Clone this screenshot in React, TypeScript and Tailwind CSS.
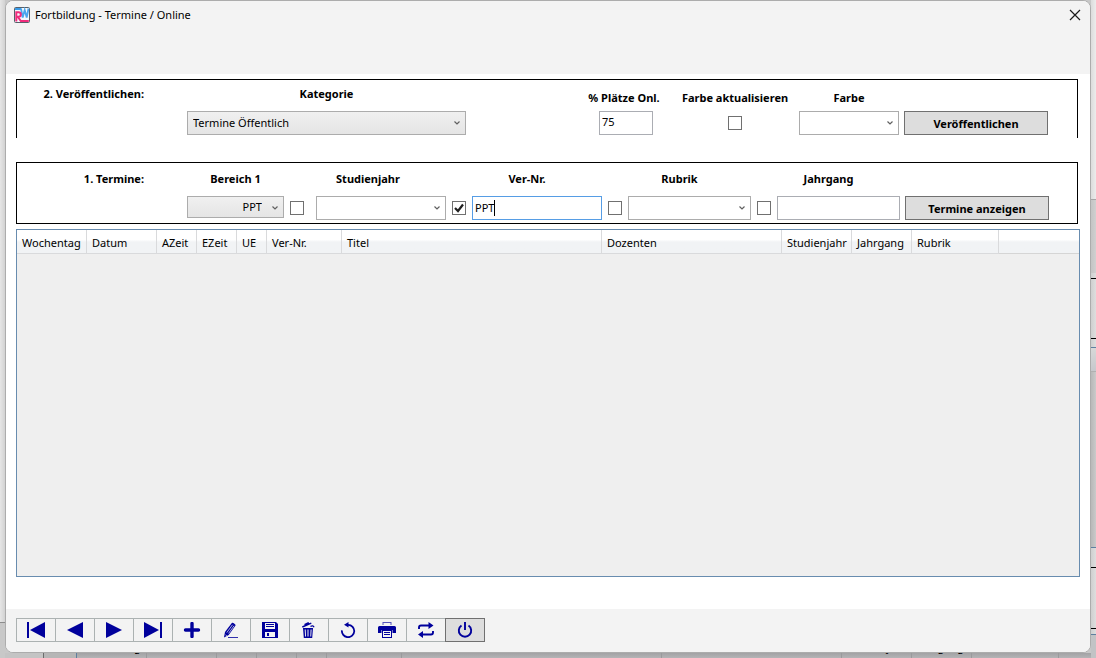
import type { ReactNode } from "react";

interface Column {
  label: string;
  width: string;
}

interface ToolAction {
  label: string;
  icon: ReactNode;
}

const COLUMNS: Column[] = [
  { label: "Wochentag", width: "w-[70px]" },
  { label: "Datum", width: "w-[70px]" },
  { label: "AZeit", width: "w-[40px]" },
  { label: "EZeit", width: "w-[40px]" },
  { label: "UE", width: "w-[30px]" },
  { label: "Ver-Nr.", width: "w-[75px]" },
  { label: "Titel", width: "w-[260px]" },
  { label: "Dozenten", width: "w-[180px]" },
  { label: "Studienjahr", width: "w-[70px]" },
  { label: "Jahrgang", width: "w-[60px]" },
  { label: "Rubrik", width: "w-[87px]" },
];

const ACTIONS: ToolAction[] = [
  {
    label: "Erster Datensatz",
    icon: (
      <>
        <rect x="1" y="0" width="2" height="16" />
        <path d="M19 0v16L4 8z" />
      </>
    ),
  },
  { label: "Vorheriger Datensatz", icon: <path d="M18 0v16L2 8z" /> },
  { label: "Nächster Datensatz", icon: <path d="M2 0v16l16-8z" /> },
  {
    label: "Letzter Datensatz",
    icon: (
      <>
        <path d="M1 0v16l15-8z" />
        <rect x="17" y="0" width="2" height="16" />
      </>
    ),
  },
  {
    label: "Neu",
    icon: <path d="M10 1.5v13M3.5 8h13" fill="none" stroke="currentColor" strokeWidth="3.4" strokeLinecap="round" />,
  },
  {
    label: "Bearbeiten",
    icon: (
      <>
        <path d="M3 15.4l1-5.4L10.800.9c.8-1 4.400 1.500 3.700 2.700L7.700 13z" />
        <path d="M5.800 10.600l5.700-7.800M7.600 11.400l5.400-7.600M4.500 12.800l1.300.9" stroke="#f3f3f3" strokeWidth=".7" fill="none" />
        <path d="M7 15.500h10" stroke="currentColor" strokeWidth="1" opacity=".8" />
      </>
    ),
  },
  {
    label: "Speichern",
    icon: (
      <path
        fillRule="evenodd"
        d="M2 0h14l2 2v14H2zM5 1v6h10V1zM5 10v5h10v-5zM6 2h8v1H6zM6 4h8v1H6zM7 11h2v3H7z"
      />
    ),
  },
  {
    label: "Löschen",
    icon: (
      <>
        <path fillRule="evenodd" d="M4 6h10l-.8 10H4.800zM5.700 7.500l.4 7h.9l-.3-7zM8.500 7.500v7h1v-7zM11.600 7.500l-.3 7h.9l.4-7z" />
        <path d="M3.300 5l9-3.800M6.500 3.500l-.4-1.200 3-1.400.7 1M11.500 4.500c1.500-1 2.800-.8 3.500.8" fill="none" stroke="currentColor" strokeWidth="1.400" />
      </>
    ),
  },
  {
    label: "Aktualisieren",
    icon: (
      <>
        <path d="M3.900 8.300a6.200 6.200 0 1 0 6.300-5.500H8.500" fill="none" stroke="currentColor" strokeWidth="1.800" />
        <path d="M10.500 0v5.600L6 2.800z" />
      </>
    ),
  },
  {
    label: "Drucken",
    icon: (
      <>
        <path d="M5.500 0h9v3h-9z" opacity=".65" />
        <path d="M6.500 1h7v3h-7z" fill="#f3f3f3" />
        <path d="M1 5.500Q1 4 2.500 4h15Q19 4 19 5.500V11h-3.500V8h-11v3H1z" />
        <path fillRule="evenodd" d="M5 8h10v8H5zM6 9v6h8V9zM7 10h6v1H7zM7 12h6v1H7z" />
      </>
    ),
  },
  {
    label: "Wechseln",
    icon: (
      <>
        <path d="M3 7V5.500Q3 3.500 5 3.500h9M17 9v1.500q0 2-2 2H6" fill="none" stroke="currentColor" strokeWidth="1.900" />
        <path d="M12.500 0l5 3.500-5 3.500zM7 9l-5 3.500L7 16z" />
      </>
    ),
  },
];

function Chevron() {
  return (
    <svg className="pointer-events-none absolute top-1/2 right-1.5 h-1 w-1.5 -translate-y-1/2" viewBox="0 0 6 4" fill="none" stroke="#606060">
      <path d="M.5.5L3 3 5.500.5" strokeWidth="1.200" />
    </svg>
  );
}

interface SelectProps {
  label: string;
  value?: string;
  className: string;
}

function Select({ label, value = "", className }: SelectProps) {
  return (
    <div className="relative w-full">
      <select
        aria-label={label}
        defaultValue={value}
        className={`block w-full appearance-none border border-[#acacac] pl-[5px] outline-none ${className}`}
      >
        <option value={value}>{value}</option>
      </select>
      <Chevron />
    </div>
  );
}

function Check({ label, checked = false }: { label: string; checked?: boolean }) {
  return (
    <span className="relative block h-3.5 w-3.5 shrink-0">
      <input
        type="checkbox"
        aria-label={label}
        defaultChecked={checked}
        className="peer block h-3.5 w-3.5 appearance-none border border-[#707070] bg-white"
      />
      <svg className="pointer-events-none absolute inset-0 hidden h-3.5 w-3.5 peer-checked:block" viewBox="0 0 14 14" fill="none" stroke="#212121">
        <path d="M3 7l3 3 5-6.500" strokeWidth="2.200" />
      </svg>
    </span>
  );
}

interface FieldProps {
  label: string;
  width: string;
  gap?: string;
  toggle?: ReactNode;
  children: ReactNode;
}

function Field({ label, width, gap = "gap-1.5", toggle, children }: FieldProps) {
  return (
    <div className="flex shrink-0 flex-col items-center">
      <span className="h-4 font-bold whitespace-nowrap">{label}</span>
      <div className={`mt-[9px] flex h-6 ${gap}`}>
        {toggle && <div className="pt-[5px]">{toggle}</div>}
        <div className={`flex ${width}`}>{children}</div>
      </div>
    </div>
  );
}

function ToolButton({ label, icon }: ToolAction) {
  return (
    <button aria-label={label} className="-mr-px flex h-6 w-10 items-center justify-center border border-[#acb2b2] text-[#00009c]">
      <svg className="h-4 w-5" viewBox="0 0 20 16" fill="currentColor">
        {icon}
      </svg>
    </button>
  );
}

function AppLogo() {
  return (
    <svg className="h-4 w-4" viewBox="0 0 16 16" fill="none">
      <rect x=".5" y=".5" width="15" height="15" rx="1" fill="#f4f8fc" stroke="#56606a" />
      <path d="M1 2h6" stroke="#3a9be8" strokeWidth="2" />
      <path d="M7 1.500l1.700 9 2-7.500 2 7.500 1.800-9" stroke="#4aa6ee" strokeWidth="1.800" />
      <path d="M2.300 14.500V5.200h2.200a2.100 2.100 0 0 1 0 4.600H3M4 10l2.800 4h8" stroke="#f02c7c" strokeWidth="2" />
    </svg>
  );
}

/* Edge of the main window that stays visible right of the dialog */
function BackdropRight() {
  return (
    <div className="flex w-[5px] shrink-0 flex-col bg-linear-to-r from-[#cfcfcf] to-[#dedede]">
      <div className="h-[199px] bg-linear-to-r from-[#dcdcdc] to-[#ececec]" />
      <div className="h-[74px] border-t border-[#a6a6a6] bg-linear-to-r from-[#c4c4c4] to-[#d0d0d0]" />
      <div className="h-[5px]" />
      <div className="h-[61px] border-y border-black" />
      <div className="h-2" />
      <div className="h-[25px] border-t border-b border-t-[#5f7f9f] border-b-[#b0b0b0] bg-linear-to-b from-[#d8d8d8] to-[#c6c8cc]" />
      <div className="min-h-0 flex-1 border-b border-[#5f7f9f] bg-linear-to-r from-[#b8b8b8] to-[#cacaca]" />
      <div className="h-[19px]" />
      <div className="h-[62px] border-y border-black" />
      <div className="h-[5px]" />
      <div className="h-6 border-t border-[#5f7f9f] bg-[#c2c3c5]" />
    </div>
  );
}

/* Only the descenders of the column titles behind the dialog show up here */
function BackdropBottom() {
  return (
    <div className="flex h-[5px] shrink-0 items-end overflow-hidden bg-linear-to-b from-[#a2a2a4] to-[#b4b4b6]" aria-hidden="true">
      <div className="h-[5px] w-[39px] shrink-0 border-r border-[#6c6c6c] bg-[#c4c4c4]" />
      <div className="h-[5px] w-[33px] shrink-0 border-r border-[#5f7f9f] bg-[#b6b6b6]" />
      {COLUMNS.map((column) => (
        <div key={column.label} className={`h-[22px] shrink-0 border-r border-[#9a9a9c] pl-[5px] leading-[22px] ${column.width}`}>
          {column.label}
        </div>
      ))}
    </div>
  );
}

export default function App() {
  return (
    <div className="flex h-screen min-h-[500px] overflow-hidden bg-[#c8c8c8] font-['Noto_Sans','Open_Sans',sans-serif] text-[11px] leading-4 text-black">
      <div className="flex w-[5px] shrink-0 flex-col bg-linear-to-r from-[#e6e6e6] to-[#d2d2d2]">
        <div className="min-h-0 flex-1 border-b border-[#8c8c8c]" />
        <div className="h-[35px] bg-[#c8c8c8]" />
      </div>

      <div className="flex min-w-0 flex-1 flex-col">
        <main className="flex min-h-0 flex-1 flex-col overflow-hidden rounded-lg border border-[#acacac] bg-white">
          {/* Title bar */}
          <header className="flex h-[73px] shrink-0 items-start justify-between bg-[#f3f3f3] pt-1.5 pr-[7px] pl-2">
            <div className="flex items-center gap-[5px]">
              <AppLogo />
              <h1>Fortbildung - Termine / Online</h1>
            </div>
            <button aria-label="Schließen" className="flex h-4 w-4 items-center justify-center">
              <svg className="h-3 w-3" viewBox="0 0 12 12" stroke="#1a1a1a" strokeWidth="1.200">
                <path d="M1 1l10 10M11 1L1 11" />
              </svg>
            </button>
          </header>

          <div className="flex min-h-0 flex-1 flex-col pt-[5px] pr-[10px] pb-8 pl-[10px]">
            {/* Publish */}
            <section className="mr-0.5 flex h-[59px] shrink-0 border border-b-0 border-black pt-1.5">
              <h2 className="w-[127px] shrink-0 text-right font-bold">2. Veröffentlichen:</h2>
              <div className="ml-[43px] flex w-[279px] shrink-0 flex-col items-center">
                <span className="h-4 font-bold">Kategorie</span>
                <div className="mt-[9px] w-full">
                  <Select label="Kategorie" value="Termine Öffentlich" className="h-6 bg-linear-to-b from-[#f0f0f0] to-[#e5e5e5]" />
                </div>
              </div>
              <div className="ml-[114px] flex pt-1">
                <div className="flex w-[88px] flex-col items-center">
                  <label htmlFor="plaetze" className="h-4 font-bold whitespace-nowrap">% Plätze Onl.</label>
                  <input id="plaetze" defaultValue="75" className="mt-[5px] ml-1 h-6 w-[54px] border border-[#abadb3] bg-white pb-1 pl-0.5 outline-none" />
                </div>
                <div className="flex w-[134px] flex-col items-center">
                  <span className="h-4 font-bold whitespace-nowrap">Farbe aktualisieren</span>
                  <div className="mt-[5px] flex h-6 items-center">
                    <Check label="Farbe aktualisieren" />
                  </div>
                </div>
                <div className="-ml-[3px] flex w-[100px] flex-col items-center">
                  <span className="h-4 font-bold">Farbe</span>
                  <div className="mt-[5px] w-full">
                    <Select label="Farbe" className="h-6 bg-white" />
                  </div>
                </div>
                <button className="mt-[21px] ml-[5px] h-6 w-[144px] border border-[#707070] bg-[#ddd] pt-0.5 font-bold">Veröffentlichen</button>
              </div>
            </section>

            {/* Filter */}
            <section className="mt-6 mr-0.5 flex h-[62px] shrink-0 gap-1.5 border border-black pt-2">
              <h2 className="mr-[37px] w-[127px] shrink-0 text-right font-bold">1. Termine:</h2>
              <Field label="Bereich 1" width="w-[97px]">
                <Select
                  label="Bereich 1"
                  value="PPT"
                  className="h-[22px] bg-linear-to-b from-[#f0f0f0] to-[#e5e5e5] pr-[21px] [text-align-last:right]"
                />
              </Field>
              <Field label="Studienjahr" width="w-[130px]" gap="gap-3" toggle={<Check label="Studienjahr filtern" />}>
                <Select label="Studienjahr" className="h-6 bg-white" />
              </Field>
              <Field label="Ver-Nr." width="w-[130px]" toggle={<Check label="Ver-Nr. filtern" checked />}>
                <div className="relative flex w-full items-center border border-[#569de5] bg-white">
                  <input aria-label="Ver-Nr." defaultValue="PPT" size={3} className="w-full pl-0.5 outline-none" />
                  <span className="absolute top-[3px] left-[21px] h-4 w-px bg-black" />
                </div>
              </Field>
              <Field label="Rubrik" width="w-[123px]" toggle={<Check label="Rubrik filtern" />}>
                <Select label="Rubrik" className="h-6 bg-white" />
              </Field>
              <Field label="Jahrgang" width="w-[123px]" toggle={<Check label="Jahrgang filtern" />}>
                <input aria-label="Jahrgang" className="w-full border border-[#abadb3] bg-white px-0.5 outline-none" />
              </Field>
              <button className="mt-[25px] -ml-px h-6 w-[144px] border border-[#707070] bg-[#ddd] pt-0.5 font-bold">Termine anzeigen</button>
            </section>

            {/* Result list */}
            <div className="mt-[5px] min-h-0 flex-1 overflow-hidden border border-[#688caf] bg-[#efefef]">
              <table className="w-full table-fixed border-separate border-spacing-0">
                <thead>
                  <tr className="h-6 bg-linear-to-b from-white from-40% to-[#f1f3f5] to-50%">
                    {COLUMNS.map((column) => (
                      <th
                        key={column.label}
                        className={`border-r border-b border-[#d9dadc] pt-1 pb-0.5 pl-[5px] text-left font-normal whitespace-nowrap ${column.width}`}
                      >
                        {column.label}
                      </th>
                    ))}
                    <td className="border-b border-[#d5d5d5]" />
                  </tr>
                </thead>
              </table>
            </div>
          </div>

          {/* Record toolbar */}
          <footer className="flex h-[43px] shrink-0 items-start bg-[#f3f3f3] pt-[9px] pl-[10px]">
            {ACTIONS.map((action) => (
              <ToolButton key={action.label} label={action.label} icon={action.icon} />
            ))}
            <button aria-label="Beenden" className="relative flex h-6 w-10 items-center justify-center border border-[#707070] bg-[#ddd] text-[#00009c]">
              <svg className="h-4 w-5" viewBox="0 0 20 16" fill="none" stroke="currentColor" strokeWidth="1.900">
                <path d="M6.500 3.500a6.200 6.200 0 1 0 7 0M10 0v8" />
              </svg>
            </button>
          </footer>
        </main>
        <BackdropBottom />
      </div>

      <BackdropRight />
    </div>
  );
}
